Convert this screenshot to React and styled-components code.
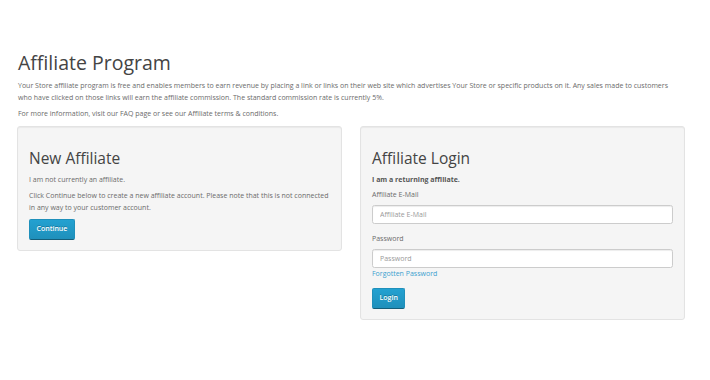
import React from 'react'
import styled, { createGlobalStyle } from 'styled-components'

const GlobalStyle = createGlobalStyle`
  body {
    margin: 0;
    background: #fff;
    font-family: "Open Sans", "Liberation Sans", sans-serif;
    color: #666;
  }
`

const Page = styled.div`
  width: 668px;
  padding: 0 18px 0 17px;
`

const Title = styled.h1`
  margin: 51px 0 6px 1px;
  font-size: 19.5px;
  line-height: 23px;
  font-weight: 400;
  color: #444;
`

const Text = styled.p`
  max-width: ${(p) => (p.$narrow ? '660px' : 'none')};
  margin: 0 0 ${(p) => (p.$gap !== undefined ? p.$gap : 3.5)}px;
  padding-left: ${(p) => (p.$indent ? 1 : 0)}px;
  font-size: 7px;
  line-height: 12px;
  color: ${(p) => (p.$strong ? '#555' : '#6b6b6b')};
  font-weight: ${(p) => (p.$strong ? 700 : 400)};
`

const Columns = styled.div`
  display: grid;
  grid-template-columns: 325px 325px;
  column-gap: 18px;
  align-items: start;
  margin-top: 6px;
`

const Well = styled.div`
  background: #f5f5f5;
  border: 1px solid #e3e3e3;
  border-radius: 3px;
  box-shadow: inset 0 1px 1px rgba(0, 0, 0, 0.05);
  padding: 11px 11px 10px;
`

const Heading = styled.h2`
  margin: 12px 0 7px;
  font-size: 15.5px;
  line-height: 17.6px;
  font-weight: 400;
  color: #444;
`

const Button = styled.button`
  display: block;
  margin-top: ${(p) => p.$top || 0}px;
  padding: 4px 6.5px;
  font-family: inherit;
  font-size: 7px;
  line-height: 10.5px;
  font-weight: 600;
  color: #fff;
  text-shadow: 0 -1px 0 rgba(0, 0, 0, 0.25);
  background-image: linear-gradient(to bottom, #23a1d1, #1f90bb);
  border: 1px solid #1f90bb;
  border-bottom-color: #145e7a;
  border-radius: 2px;
  cursor: pointer;
`

const Field = styled.div`
  margin-bottom: ${(p) => p.$gap || 0}px;
`

const Label = styled.label`
  display: block;
  margin-bottom: 4px;
  font-size: 7px;
  line-height: 12px;
  color: #6b6b6b;
`

const Input = styled.input`
  box-sizing: border-box;
  display: block;
  width: 301px;
  height: 19.5px;
  padding: 0 7px;
  font-family: inherit;
  font-size: 7px;
  color: #555;
  background: #fff;
  border: 1px solid #ccc;
  border-radius: 2.5px;
  box-shadow: inset 0 1px 1px rgba(0, 0, 0, 0.075);
  &::placeholder {
    color: #999;
  }
`

const Link = styled.a`
  display: block;
  font-size: 7px;
  line-height: 12px;
  color: #3a9fcf;
  text-decoration: none;
`

export default function App() {
  return (
    <>
      <GlobalStyle />
      <Page>
        <Title>Affiliate Program</Title>
        <Text $indent $narrow>
          Your Store affiliate program is free and enables members to earn revenue by placing a link or links on
          their web site which advertises Your Store or specific products on it. Any sales made to customers who
          have clicked on those links will earn the affiliate commission. The standard commission rate is currently
          5%.
        </Text>
        <Text $indent>
          For more information, visit our FAQ page or see our Affiliate terms &amp; conditions.
        </Text>
        <Columns>
          <Well>
            <Heading>New Affiliate</Heading>
            <Text>I am not currently an affiliate.</Text>
            <Text $gap={5.5}>
              Click Continue below to create a new affiliate account. Please note that this is not connected in
              any way to your customer account.
            </Text>
            <Button type="button">Continue</Button>
          </Well>
          <Well>
            <Heading>Affiliate Login</Heading>
            <Text $strong $gap={2.5}>I am a returning affiliate.</Text>
            <Field $gap={8.5}>
              <Label htmlFor="aff-email">Affiliate E-Mail</Label>
              <Input id="aff-email" type="text" placeholder="Affiliate E-Mail" />
            </Field>
            <Field>
              <Label htmlFor="aff-pass">Password</Label>
              <Input id="aff-pass" type="password" placeholder="Password" />
              <Link href="#">Forgotten Password</Link>
            </Field>
            <Button type="button" $top={8}>Login</Button>
          </Well>
        </Columns>
      </Page>
    </>
  )
}
